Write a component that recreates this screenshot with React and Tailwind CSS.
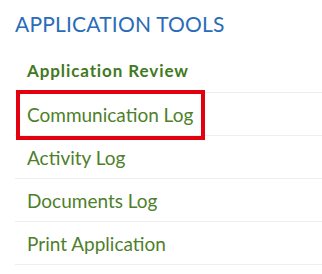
export default function App() {
  const links = ['Communication Log', 'Activity Log', 'Documents Log', 'Print Application'];
  return (
    <div className="w-[322px] h-[274px] bg-white overflow-hidden pl-[15px] pt-[11px]" style={{ fontFamily: 'Lato, "Open Sans", sans-serif' }}>
      <h2 className="text-[21px] leading-[26px] text-[#2a6cb8] tracking-[0.2px]">APPLICATION TOOLS</h2>
      <ul className="mt-[22px]">
        <li className="border-b border-[#eeeeee] pl-[12px] pb-[9px]">
          <span className="text-[17px] leading-[22px] font-bold text-[#3f7a1e] tracking-[0.9px]">Application Review</span>
        </li>
        {links.map((l, i) => (
          <li key={l} className="border-b border-[#eeeeee] h-[43px] flex items-center">
            <a
              href="#"
              className={
                'flex items-center h-[42px] mt-[2px] ml-[5px] pl-[7px] pr-[8px] text-[19px] leading-[26px] text-[#4e7f2b] ' +
                (i === 0 ? 'outline-4 outline-[#e3000f]' : '')
              }
            >
              {l}
            </a>
          </li>
        ))}
      </ul>
    </div>
  );
}
